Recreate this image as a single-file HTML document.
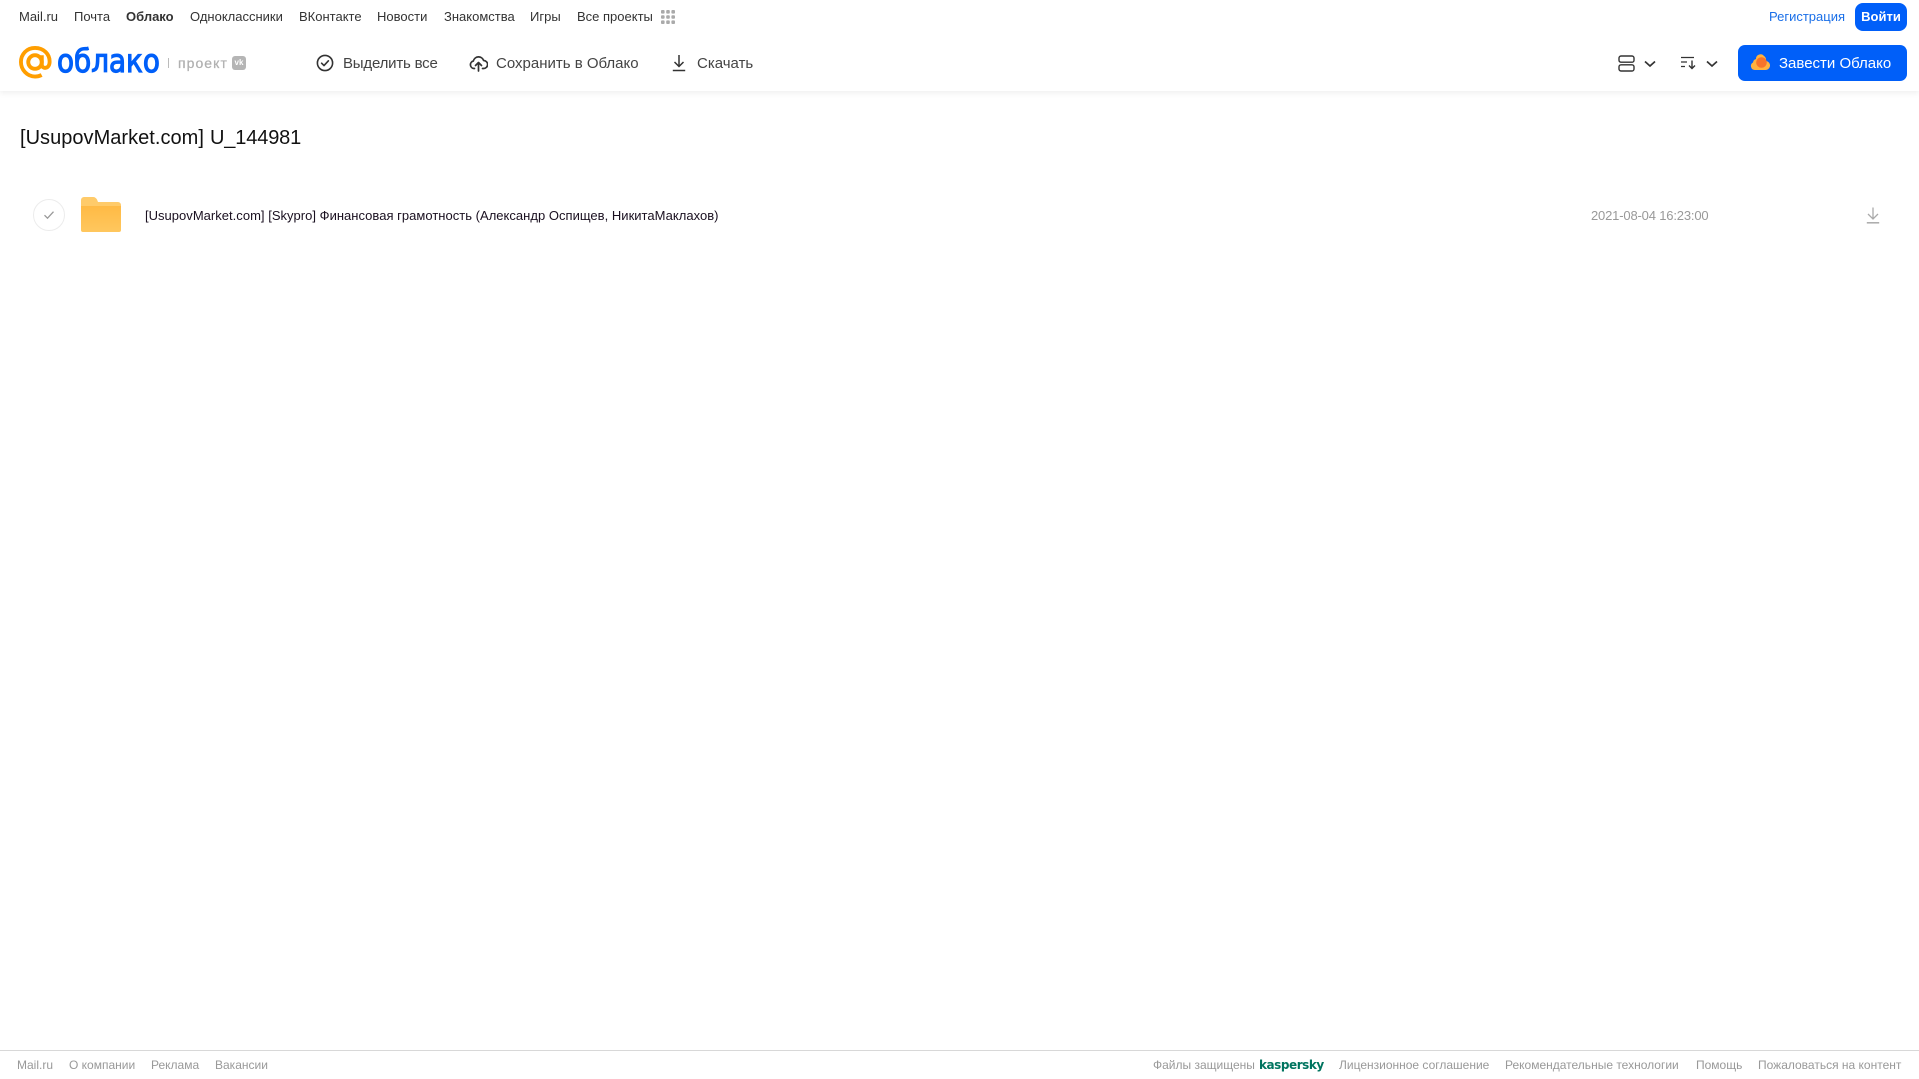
<!DOCTYPE html>
<html lang="ru">
<head>
<meta charset="utf-8">
<title>Облако</title>
<style>
html,body{margin:0;padding:0;background:#fff}
body{width:1919px;height:1079px;position:relative;overflow:hidden;font-family:"Liberation Sans",Arial,sans-serif;color:#2c2d2e}
.t{position:absolute;white-space:nowrap;line-height:16px}
svg{position:absolute;display:block}
.top{font-size:13px;top:9px;color:#333}
.tool{font-size:15px;top:56px;color:#444;line-height:16px}
.foot{font-size:12px;top:1057px;color:#999}
</style>
</head>
<body>
<div style="position:absolute;left:0;top:0;width:1919px;height:91px;background:#fff;box-shadow:0 2px 6px rgba(0,0,0,.07)"></div>

<div class="t top" style="left:19px">Mail.ru</div>
<div class="t top" style="left:74px">Почта</div>
<div class="t top" style="left:126px;font-weight:bold">Облако</div>
<div class="t top" style="left:190px">Одноклассники</div>
<div class="t top" style="left:299px">ВКонтакте</div>
<div class="t top" style="left:377px">Новости</div>
<div class="t top" style="left:444px">Знакомства</div>
<div class="t top" style="left:530px">Игры</div>
<div class="t top" style="left:577px">Все проекты</div>
<svg style="left:661px;top:10px" width="14" height="14" viewBox="0 0 14 14" fill="#aaa"><rect x="0" y="0" width="3.6" height="3.6" rx="1"/><rect x="5.2" y="0" width="3.6" height="3.6" rx="1"/><rect x="10.4" y="0" width="3.6" height="3.6" rx="1"/><rect x="0" y="5.2" width="3.6" height="3.6" rx="1"/><rect x="5.2" y="5.2" width="3.6" height="3.6" rx="1"/><rect x="10.4" y="5.2" width="3.6" height="3.6" rx="1"/><rect x="0" y="10.4" width="3.6" height="3.6" rx="1"/><rect x="5.2" y="10.4" width="3.6" height="3.6" rx="1"/><rect x="10.4" y="10.4" width="3.6" height="3.6" rx="1"/></svg>

<div class="t" style="left:1769px;top:9px;font-size:13px;color:#1a6fe8">Регистрация</div>
<div style="position:absolute;left:1855px;top:3px;width:52px;height:28px;border-radius:8px;background:#005ff9;color:#fff;font-size:13px;font-weight:bold;text-align:center;line-height:28px">Войти</div>

<!-- logo -->
<svg style="left:19px;top:46px" width="33" height="33" viewBox="0 0 34 34" fill="none" stroke="#ff9e00" stroke-width="4"><circle cx="16.5" cy="16.5" r="7"/><path d="M23.5 9.5v9.5c0 5 7.5 5 8-2 .6-8.5-6-15-15-15C8 2 2 8.5 2 16.5S8.5 31.5 16.5 31.5c2.500 0 4.700-.5 6.800-1.600"/></svg>
<div class="t" style="left:57px;top:42px;font-size:32px;line-height:38px;color:#005ff9;font-family:'DejaVu Sans',sans-serif;-webkit-text-stroke:1.2px #005ff9;transform:scaleX(.87);transform-origin:left">облако</div>
<div style="position:absolute;left:168px;top:58px;width:1px;height:10px;background:#bbb"></div>
<div class="t" style="left:178px;top:55px;font-size:14px;color:#b0b0b0;letter-spacing:1.05px;-webkit-text-stroke:.25px #b0b0b0">проект</div>
<div style="position:absolute;left:232px;top:56px;width:14px;height:14px;border-radius:3px;background:#b5b5b5;color:#fff;font-size:8px;font-weight:bold;text-align:center;line-height:14px">vk</div>

<!-- toolbar -->
<svg style="left:316px;top:54px" width="18" height="18" viewBox="0 0 18 18" fill="none" stroke="#333" stroke-width="1.6"><circle cx="9" cy="9" r="7.6"/><path d="M5.6 9.2l2.4 2.400 4.400-4.800" stroke-linecap="round" stroke-linejoin="round"/></svg>
<div class="t tool" style="left:343px;letter-spacing:-.2px">Выделить все</div>
<svg style="left:469px;top:54px" width="19" height="18" viewBox="0 0 19 18" fill="none" stroke="#333" stroke-width="1.7" stroke-linecap="round" stroke-linejoin="round"><path d="M5.5 14.500H5a3.800 3.800 0 0 1-.6-7.500A5.300 5.300 0 0 1 14.600 6.500a3.900 3.900 0 0 1 0 8H13.500"/><path d="M9.500 17V9M6.500 11.500l3-3 3 3"/></svg>
<div class="t tool" style="left:496px">Сохранить в Облако</div>
<svg style="left:672px;top:54px" width="14" height="18" viewBox="0 0 14 18" fill="none" stroke="#333" stroke-width="1.5"><path d="M7 1v11M2.500 8L7 12.500 11.500 8"/><path d="M.8 16.500h12.400"/></svg>
<div class="t tool" style="left:697px">Скачать</div>

<svg style="left:1618px;top:55px" width="17" height="17" viewBox="0 0 17 17" fill="none" stroke="#333" stroke-width="1.4"><rect x="1" y="1" width="15" height="6.200" rx="2"/><rect x="1" y="9.800" width="15" height="6.200" rx="2"/></svg>
<svg style="left:1644px;top:60px" width="12" height="8" viewBox="0 0 12 8" fill="none" stroke="#333" stroke-width="1.700"><path d="M1 1.500l5 4.500 5-4.500"/></svg>
<svg style="left:1681px;top:56px" width="16" height="14" viewBox="0 0 16 14" fill="none" stroke="#333" stroke-width="1.2"><path d="M0 1.500h13M0 6h6M0 10.500h4"/><path d="M11 4.500v8M8 9.500l3 3 3-3" stroke-width="1.400"/></svg>
<svg style="left:1706px;top:60px" width="12" height="8" viewBox="0 0 12 8" fill="none" stroke="#333" stroke-width="1.700"><path d="M1 1.500l5 4.500 5-4.500"/></svg>

<div style="position:absolute;left:1738px;top:45px;width:169px;height:36px;border-radius:7px;background:#005ff9"></div>
<svg style="left:1750px;top:54px" width="20" height="17" viewBox="0 0 20 17"><path d="M5 16a4 4 0 0 1-2-7.500A4 4 0 0 1 6 5a4.500 4.500 0 0 1 8-3 5 5 0 0 1 2 5 4.500 4.500 0 0 1-1 9z" fill="#ffb23f"/><circle cx="11.500" cy="8.500" r="5.300" fill="#f6732b"/></svg>
<div class="t" style="left:1779px;top:56px;font-size:15px;color:#fff">Завести Облако</div>

<!-- title -->
<div class="t" style="left:20px;top:125px;font-size:20px;line-height:26px;color:#111"><span style="letter-spacing:.03px">[UsupovMarket.com] </span><span style="letter-spacing:-.15px;margin-left:.5px">U_144981</span></div>

<!-- row -->
<div style="position:absolute;left:33px;top:199px;width:30px;height:30px;border:1px solid #ececec;border-radius:50%"></div>
<svg style="left:43px;top:210px" width="12" height="10" viewBox="0 0 12 10" fill="none" stroke="#999" stroke-width="1.300"><path d="M1.500 5.200l3 3 6-6.500"/></svg>
<svg style="left:81px;top:197px" width="40" height="35" viewBox="0 0 40 35"><defs><linearGradient id="f" x1="0" y1="0" x2="0" y2="1"><stop offset="0" stop-color="#ffba45"/><stop offset="1" stop-color="#ffc75e"/></linearGradient></defs><path d="M3 0h9c2 0 3 1 4 2.500l1 2.500h20a3 3 0 0 1 3 3v5H0V3a3 3 0 0 1 3-3z" fill="#ffcb6a"/><path d="M0 9h40v24a2 2 0 0 1-2 2H2a2 2 0 0 1-2-2z" fill="url(#f)"/></svg>
<div class="t" style="left:145px;top:208px;font-size:13px;color:#1a1020;letter-spacing:.02px">[UsupovMarket.com] [Skypro] Финансовая грамотность (Александр Оспищев, НикитаМаклахов)</div>
<div class="t" style="left:1591px;top:208px;font-size:13px;color:#999;letter-spacing:-.17px">2021-08-04 16:23:00</div>
<svg style="left:1866px;top:207px" width="14" height="17" viewBox="0 0 14 17" fill="none" stroke="#aaa" stroke-width="1.300"><path d="M7 0.500v11M2 7l5 5 5-5"/><path d="M.8 15.800h12.400" stroke-width="1.500"/></svg>

<!-- footer -->
<div style="position:absolute;left:0;top:1050px;width:1919px;height:1px;background:#d8d8d8"></div>
<div class="t foot" style="left:17px">Mail.ru</div>
<div class="t foot" style="left:69px">О компании</div>
<div class="t foot" style="left:151px">Реклама</div>
<div class="t foot" style="left:215px">Вакансии</div>
<div class="t foot" style="left:1153px">Файлы защищены</div>
<div class="t" style="left:1259px;top:1057px;font-size:12px;font-weight:bold;color:#00745f;font-family:'DejaVu Sans',sans-serif;letter-spacing:-.45px">kaspersky</div>
<div class="t foot" style="left:1339px">Лицензионное соглашение</div>
<div class="t foot" style="left:1505px">Рекомендательные технологии</div>
<div class="t foot" style="left:1696px">Помощь</div>
<div class="t foot" style="left:1758px">Пожаловаться на контент</div>
</body>
</html>
